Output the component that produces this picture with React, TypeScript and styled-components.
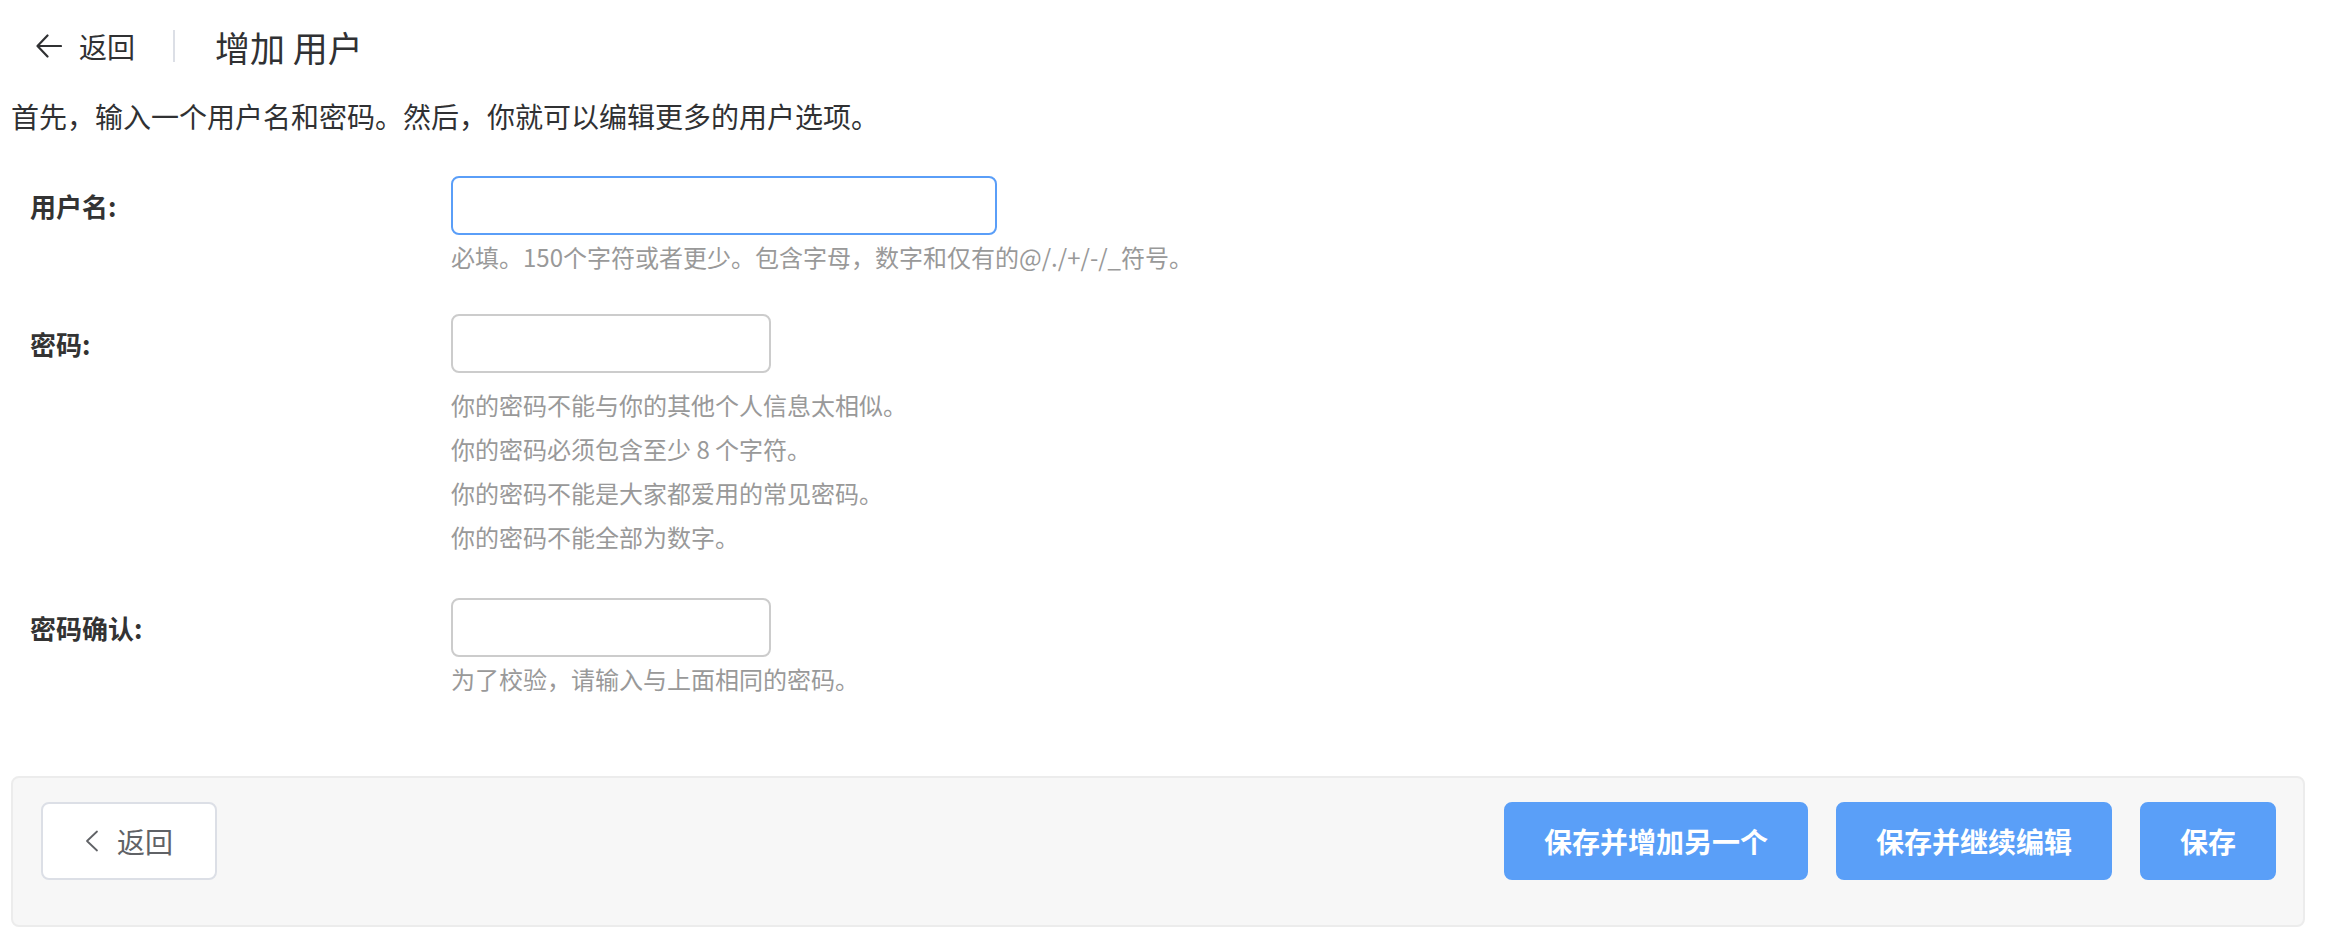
import React from "react";
import styled, { createGlobalStyle } from "styled-components";

const GlobalStyle = createGlobalStyle`
  html, body {
    margin: 0;
    padding: 0;
    background: #ffffff;
  }
  body {
    font-family: "Noto Sans CJK SC", "Noto Sans", sans-serif;
    color: #303133;
  }
  * { box-sizing: border-box; }
`;

const Page = styled.div`
  padding: 0 27px 0 11px;
`;

const Header = styled.header`
  height: 92px;
  display: flex;
  align-items: center;
  padding-left: 25px;
`;

const BackLink = styled.div`
  display: flex;
  align-items: center;
  gap: 17px;
  font-size: 28px;
  color: #303133;
  cursor: pointer;
`;

const Divider = styled.div`
  width: 2px;
  height: 32px;
  background: #dcdfe6;
  margin: 0 40px 0 38px;
`;

const Title = styled.h1`
  margin: 0;
  font-size: 35px;
  font-weight: 400;
  color: #303133;
`;

const Intro = styled.p`
  margin: 4px 0 0;
  font-size: 28px;
  line-height: 40px;
  color: #303133;
`;

const Form = styled.div`
  padding-top: 20px;
`;

const Row = styled.div`
  display: grid;
  grid-template-columns: 440px 1fr;
  padding: 20px 0 19px;
`;

const Label = styled.label`
  padding-left: 19px;
  font-size: 26px;
  font-weight: 700;
  line-height: 59px;
  color: #333333;
`;

const Field = styled.div`
  display: flex;
  flex-direction: column;
  align-items: flex-start;
`;

const Input = styled.input<{ $width: number; $focused?: boolean }>`
  width: ${(p) => p.$width}px;
  height: 59px;
  border: 2px solid ${(p) => (p.$focused ? "#5a9ef8" : "#cccccc")};
  border-radius: 8px;
  background: #fff;
  outline: none;
  font-size: 26px;
  padding: 0 12px;
  font-family: inherit;
`;

const Help = styled.div<{ $gap?: number }>`
  margin-top: ${(p) => p.$gap ?? 4}px;
  font-size: 24px;
  line-height: 36px;
  color: #999999;
`;

const HelpList = styled.ul`
  margin: 10px 0 0;
  padding: 0;
  list-style: none;
  font-size: 24px;
  line-height: 44px;
  color: #999999;
`;

const Footer = styled.div`
  margin-top: 60px;
  display: flex;
  justify-content: space-between;
  align-items: flex-start;
  background: #f7f7f7;
  border: 2px solid #ececec;
  border-radius: 8px;
  padding: 24px 27px 45px 28px;
`;

const BackButton = styled.button`
  display: flex;
  align-items: center;
  gap: 18px;
  height: 78px;
  padding: 0 42px;
  background: #ffffff;
  border: 2px solid #dcdfe6;
  border-radius: 8px;
  font-family: inherit;
  font-size: 28px;
  color: #606266;
  cursor: pointer;
`;

const Actions = styled.div`
  display: flex;
  gap: 28px;
`;

const PrimaryButton = styled.button`
  height: 78px;
  padding: 0 38px;
  background: #5a9ff8;
  border: 2px solid #5a9ff8;
  border-radius: 8px;
  font-family: inherit;
  font-size: 28px;
  font-weight: 700;
  color: #ffffff;
  cursor: pointer;
`;

const ArrowIcon = () => (
  <svg width="26" height="24" viewBox="0 0 26 24" fill="none">
    <path
      d="M11.5 1.5 L1.5 12 L11.5 22.5 M1.5 12 H25"
      stroke="#303133"
      strokeWidth="2.2"
      strokeLinecap="round"
      strokeLinejoin="round"
    />
  </svg>
);

const ChevronIcon = () => (
  <svg width="14" height="22" viewBox="0 0 14 22" fill="none">
    <path
      d="M12 1.5 L2 11 L12 20.5"
      stroke="#606266"
      strokeWidth="1.8"
      strokeLinecap="round"
      strokeLinejoin="round"
    />
  </svg>
);

export default function App() {
  return (
    <>
      <GlobalStyle />
      <Page>
        <Header>
          <BackLink>
            <ArrowIcon />
            <span>返回</span>
          </BackLink>
          <Divider />
          <Title>增加 用户</Title>
        </Header>
        <Intro>首先，输入一个用户名和密码。然后，你就可以编辑更多的用户选项。</Intro>
        <Form>
          <Row>
            <Label>用户名:</Label>
            <Field>
              <Input $width={546} $focused type="text" />
              <Help>必填。150个字符或者更少。包含字母，数字和仅有的@/./+/-/_符号。</Help>
            </Field>
          </Row>
          <Row>
            <Label>密码:</Label>
            <Field>
              <Input $width={320} type="password" />
              <HelpList>
                <li>你的密码不能与你的其他个人信息太相似。</li>
                <li>你的密码必须包含至少 8 个字符。</li>
                <li>你的密码不能是大家都爱用的常见密码。</li>
                <li>你的密码不能全部为数字。</li>
              </HelpList>
            </Field>
          </Row>
          <Row>
            <Label>密码确认:</Label>
            <Field>
              <Input $width={320} type="password" />
              <Help>为了校验，请输入与上面相同的密码。</Help>
            </Field>
          </Row>
        </Form>
        <Footer>
          <BackButton>
            <ChevronIcon />
            <span>返回</span>
          </BackButton>
          <Actions>
            <PrimaryButton>保存并增加另一个</PrimaryButton>
            <PrimaryButton>保存并继续编辑</PrimaryButton>
            <PrimaryButton>保存</PrimaryButton>
          </Actions>
        </Footer>
      </Page>
    </>
  );
}
